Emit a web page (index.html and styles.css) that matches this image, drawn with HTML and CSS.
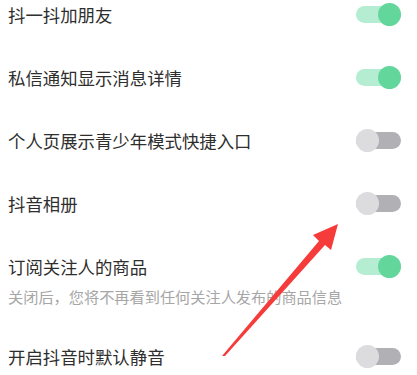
FILE: index.html
```html
<!DOCTYPE html>
<html lang="zh">
<head>
    <meta charset="UTF-8">
    <meta name="viewport" content="width=device-width, initial-scale=1.0">
    <title>隐私设置</title>
    <link rel="stylesheet" href="styles.css">
</head>
<body>
    <div class="settings">
        <div class="item">
            <div class="row">
                <span class="label">抖一抖加朋友</span>
                <span class="switch on"></span>
            </div>
        </div>
        <div class="item">
            <div class="row">
                <span class="label">私信通知显示消息详情</span>
                <span class="switch on"></span>
            </div>
        </div>
        <div class="item">
            <div class="row">
                <span class="label">个人页展示青少年模式快捷入口</span>
                <span class="switch"></span>
            </div>
        </div>
        <div class="item">
            <div class="row">
                <span class="label">抖音相册</span>
                <span class="switch"></span>
            </div>
        </div>
        <div class="item with-note">
            <div class="row">
                <span class="label">订阅关注人的商品</span>
                <span class="switch on"></span>
            </div>
            <p class="note">关闭后，您将不再看到任何关注人发布的商品信息</p>
        </div>
        <div class="item">
            <div class="row">
                <span class="label">开启抖音时默认静音</span>
                <span class="switch"></span>
            </div>
        </div>
    </div>

    <!-- 标注箭头 -->
    <svg class="arrow" width="417" height="375" viewBox="0 0 417 375">
        <polygon points="222,356 319,241 313,235 338,224 331,250 325,245 225,356" fill="#f63b3b"/>
    </svg>
</body>
</html>
```

FILE: styles.css
```css
* {
    margin: 0;
    padding: 0;
    box-sizing: border-box;
}

body {
    font-family: "Noto Sans CJK SC", "Noto Sans", sans-serif;
    background-color: #fff;
    width: 417px;
    height: 375px;
    overflow: hidden;
    position: relative;
}

.settings {
    margin-top: -17px;
}

.row {
    display: flex;
    align-items: center;
    justify-content: space-between;
    height: 63px;
    padding: 0 16px 0 8px;
}

.label {
    font-size: 17.4px;
    color: #2e2e2e;
    line-height: 24px;
}

.with-note {
    padding-bottom: 19px;
}

.note {
    margin-top: -12px;
    padding-left: 8px;
    font-size: 15.2px;
    line-height: 20px;
    color: #a6a6a6;
}

.switch {
    position: relative;
    width: 45px;
    height: 23px;
    flex-shrink: 0;
}

.switch::before {
    content: "";
    position: absolute;
    left: 0;
    right: 0;
    top: 3px;
    height: 17px;
    border-radius: 9px;
    background: #b1b1b5;
}

.switch::after {
    content: "";
    position: absolute;
    left: 0;
    top: 0;
    width: 23px;
    height: 23px;
    border-radius: 50%;
    background: #dcdcde;
}

.switch.on::before {
    background: #b4edd1;
}

.switch.on::after {
    left: auto;
    right: 0;
    background: #63d69c;
}

.arrow {
    position: absolute;
    left: 0;
    top: 0;
}
```
